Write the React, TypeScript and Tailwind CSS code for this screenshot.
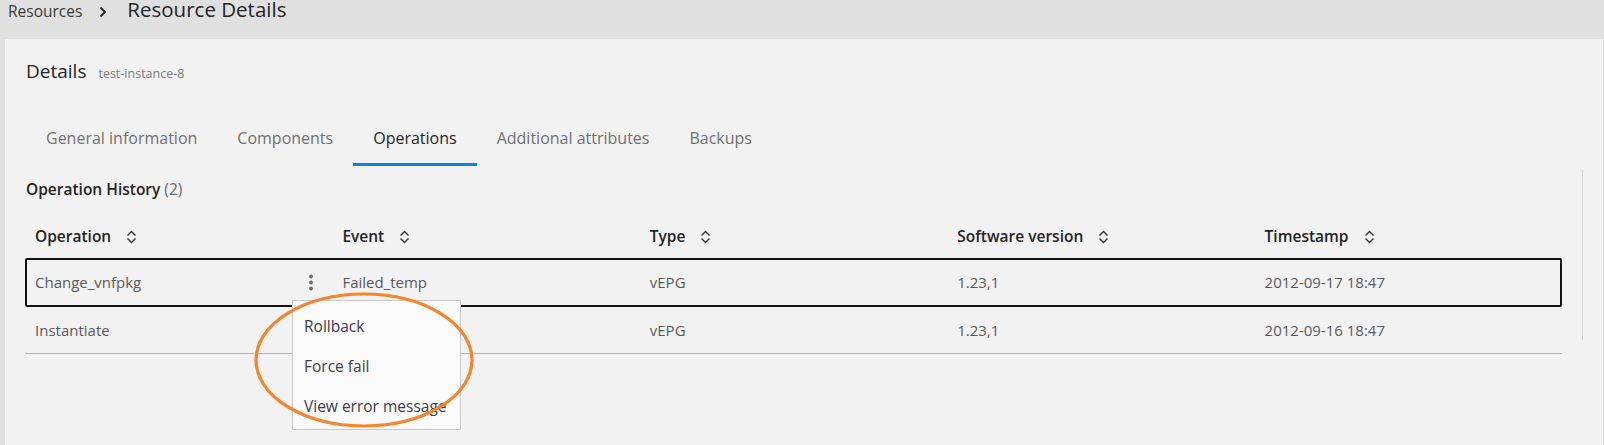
import React from "react";

const SortIcon = () => (
  <svg width="11" height="16" viewBox="0 0 11 16" className="ml-[15px]" fill="none">
    <path d="M1.5 6.5 L5.5 2.5 L9.5 6.5" stroke="#333" strokeWidth="1.4" />
    <path d="M1.5 9.5 L5.5 13.5 L9.5 9.5" stroke="#333" strokeWidth="1.4" />
  </svg>
);

const Kebab = () => (
  <svg width="6" height="17" viewBox="0 0 6 17">
    <circle cx="3" cy="2.5" r="1.9" fill="#6a6a6a" />
    <circle cx="3" cy="8.5" r="1.9" fill="#6a6a6a" />
    <circle cx="3" cy="14.5" r="1.9" fill="#6a6a6a" />
  </svg>
);

const cols = ["Operation", "Event", "Type", "Software version", "Timestamp"];
const rows = [
  ["Change_vnfpkg", "Failed_temp", "vEPG", "1.23,1", "2012-09-17 18:47"],
  ["Instantiate", "", "vEPG", "1.23,1", "2012-09-16 18:47"],
];

export default function App() {
  const tabs = ["General information", "Components", "Operations", "Additional attributes", "Backups"];
  return (
    <div
      className="relative w-[1604px] h-[445px] overflow-hidden bg-[#e0e0e0]"
      style={{ fontFamily: "'Open Sans', 'Noto Sans', sans-serif" }}
    >
      {/* breadcrumb */}
      <div className="h-[39px] px-[8px] overflow-hidden">
        <div className="flex items-baseline -mt-[5px]">
          <span className="text-[15.5px] text-[#3a3a3a] leading-[28px]">Resources</span>
          <svg width="8" height="12" viewBox="0 0 8 12" className="ml-[17px] mr-[20px] self-center mt-[4px]" fill="none">
            <path d="M1.5 1.5 L6 6 L1.5 10.5" stroke="#242424" strokeWidth="1.8" />
          </svg>
          <span className="text-[20.5px] text-[#242424] leading-[28px]">Resource Details</span>
        </div>
      </div>

      {/* panel */}
      <div className="ml-[5px] mr-[1px] h-[406px] bg-[#f2f2f2] px-[20px] pt-[20px]">
        <div className="flex items-baseline h-[24px] leading-[24px]">
          <span className="text-[19px] text-[#242424] ml-[1px]">Details</span>
          <span className="ml-[12px] text-[12.5px] text-[#7a7a7a]">test-instance-8</span>
        </div>

        {/* tabs */}
        <div className="flex mt-[29px] ml-[1px]">
          {tabs.map((t) => (
            <div
              key={t}
              className={
                "h-[54px] px-[20px] flex items-center text-[16px] border-b-[3px] " +
                (t === "Operations"
                  ? "border-[#0a82e6] text-[#242424]"
                  : "border-transparent text-[#707070]")
              }
            >
              {t}
            </div>
          ))}
        </div>

        <div className="flex">
          <div className="w-[1537px]">
            <div className="mt-[13px] h-[20px] leading-[20px] text-[15.5px] ml-[1px]">
              <span className="font-semibold text-[#242424]">Operation History</span>
              <span className="text-[#6a6a6a]"> (2)</span>
            </div>

            {/* table header */}
            <div className="mt-[17px] h-[42px] grid grid-cols-5">
              {cols.map((c) => (
                <div key={c} className="flex items-center pl-[10px] text-[15.5px] font-semibold text-[#242424]">
                  {c}
                  <SortIcon />
                </div>
              ))}
            </div>

            {/* row 1 */}
            <div className="h-[49px] grid grid-cols-5 ring-2 ring-inset ring-[#111] rounded-[2px]">
              {rows[0].map((v, i) => (
                <div key={i} className="flex items-center pl-[10px] text-[15px] text-[#5a5a5a]">
                  <span className="flex-1">{v}</span>
                  {i === 0 && (
                    <span className="mr-[18px] flex items-center">
                      <Kebab />
                    </span>
                  )}
                </div>
              ))}
            </div>

            {/* row 2 */}
            <div className="h-[47px] grid grid-cols-5 border-b border-[#b4b4b4]">
              {rows[1].map((v, i) => (
                <div key={i} className="flex items-center pl-[10px] text-[15px] text-[#5a5a5a]">
                  {v}
                </div>
              ))}
            </div>
          </div>
          <div className="ml-[20px] mt-[4px] w-px h-[170px] bg-[#d2d2d2]" />
        </div>
      </div>

      {/* dropdown menu */}
      <div className="absolute left-[292px] top-[300px] w-[169px] h-[130px] bg-[#fafafa] border border-[#c8c8c8] pt-[6px]">
        {["Rollback", "Force fail", "View error message"].map((m) => (
          <div key={m} className="h-[40px] flex items-center pl-[11px] text-[15.5px] text-[#3c3c4c] whitespace-nowrap">
            {m}
          </div>
        ))}
      </div>

      {/* annotation ellipse */}
      <svg className="absolute left-0 top-0 pointer-events-none" width="1604" height="445">
        <ellipse cx="364" cy="360" rx="108" ry="66" fill="none" stroke="#f7842a" strokeWidth="3.2" />
      </svg>
    </div>
  );
}
